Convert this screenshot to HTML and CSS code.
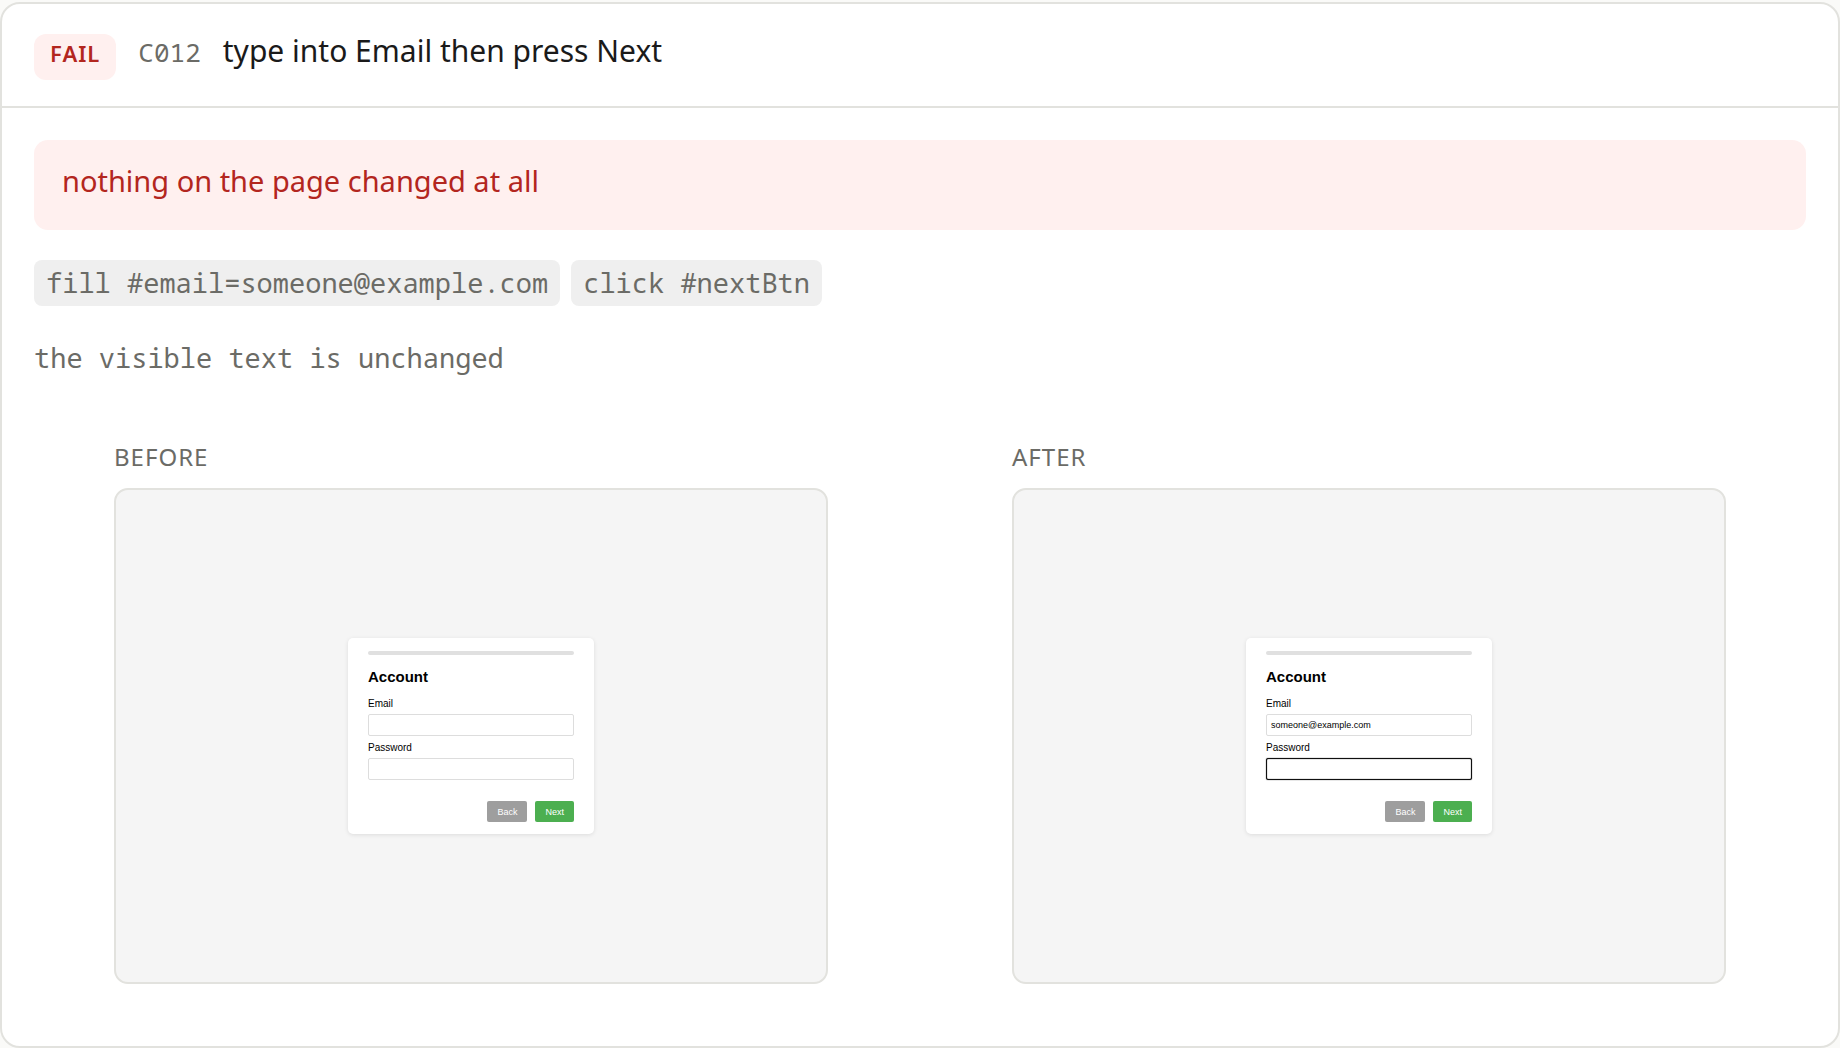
FILE: index.html
```html
<!DOCTYPE html>
<html lang="en">
<head>
    <meta charset="UTF-8">
    <meta name="viewport" content="width=device-width, initial-scale=1.0">
    <title>C012 - type into Email then press Next</title>
    <link rel="stylesheet" href="styles.css">
</head>
<body>
    <article class="case">
        <header class="case-head">
            <span class="badge">FAIL</span>
            <span class="case-id">C012</span>
            <h1 class="case-title">type into Email then press Next</h1>
        </header>

        <div class="case-body">
            <p class="reason">nothing on the page changed at all</p>
            <div class="steps">
                <code>fill #email=someone@example.com</code>
                <code>click #nextBtn</code>
            </div>
            <p class="note">the visible text is unchanged</p>

            <div class="shots">
                <figure>
                    <figcaption>Before</figcaption>
                    <div class="shot">
                        <form class="wizard">
                            <div class="progress"></div>
                            <h2>Account</h2>
                            <label for="email-before">Email</label>
                            <input type="email" id="email-before">
                            <label for="password-before">Password</label>
                            <input type="password" id="password-before">
                            <div class="actions">
                                <button type="button" class="back">Back</button>
                                <button type="button" class="next">Next</button>
                            </div>
                        </form>
                    </div>
                </figure>
                <figure>
                    <figcaption>After</figcaption>
                    <div class="shot">
                        <form class="wizard">
                            <div class="progress"></div>
                            <h2>Account</h2>
                            <label for="email-after">Email</label>
                            <input type="email" id="email-after" value="someone@example.com">
                            <label for="password-after">Password</label>
                            <input type="password" id="password-after" class="focused">
                            <div class="actions">
                                <button type="button" class="back">Back</button>
                                <button type="button" class="next">Next</button>
                            </div>
                        </form>
                    </div>
                </figure>
            </div>
        </div>
    </article>
</body>
</html>
```
FILE: styles.css
```css
* {
    box-sizing: border-box;
}
body {
    margin: 0;
    padding-top: 2px;
    background: #fafaf8;
    color: #1a1a1a;
    font-family: "Noto Sans", sans-serif;
    font-size: 29px;
    line-height: 45px;
}
.case {
    background: #fff;
    border: 2px solid #e2e2de;
    border-radius: 20px;
}
.case-head {
    display: flex;
    align-items: baseline;
    padding: 24px 32px 26px;
    border-bottom: 2px solid #e2e2de;
}
.badge {
    padding: 3px 16px 10px;
    border-radius: 12px;
    background: #fff0ef;
    color: #b3261e;
    font-size: 22px;
    font-weight: 600;
    line-height: 33px;
    letter-spacing: 1px;
}
.case-id {
    margin: 0 22px;
    color: #6b6b66;
    font-family: "Noto Sans Mono", "DejaVu Sans Mono", monospace;
    font-size: 26px;
}
.case-title {
    margin: 0;
    font-size: 30px;
    font-weight: 400;
}
.case-body {
    padding: 32px 32px 62px;
}
.reason {
    margin: 0 0 30px;
    padding: 18px 28px 27px;
    border-radius: 14px;
    background: #fff0ef;
    color: #b3261e;
}
.steps {
    display: flex;
    flex-wrap: wrap;
    gap: 11px;
}
.steps code {
    padding: 4px 12px 5px;
    border-radius: 8px;
    background: #efefef;
    color: #6b6b66;
    font-family: "Noto Sans Mono", "DejaVu Sans Mono", monospace;
    font-size: 27px;
    line-height: 37px;
}
.note {
    margin: 29px 0 0;
    color: #6b6b66;
    font-family: "Noto Sans Mono", "DejaVu Sans Mono", monospace;
    font-size: 27px;
}
.shots {
    display: grid;
    grid-template-columns: 1fr 1fr;
    gap: 24px;
    margin-top: 59px;
}
figure {
    margin: 0 80px;
}
figcaption {
    margin-bottom: 13px;
    color: #6b6b66;
    font-size: 24px;
    line-height: 36px;
    letter-spacing: 1px;
    text-transform: uppercase;
}
.shot {
    display: flex;
    align-items: center;
    justify-content: center;
    aspect-ratio: 714 / 496;
    border: 2px solid #e2e2de;
    border-radius: 14px;
    background: #f5f5f5;
}

/* the captured page, at thumbnail size */
.wizard {
    width: 246px;
    padding: 13px 20px 12px;
    border-radius: 5px;
    background: #fff;
    box-shadow: 0 1px 4px rgba(0, 0, 0, 0.1);
    color: #000;
    font-family: "Liberation Sans", Arial, sans-serif;
    font-size: 10px;
    line-height: 12px;
}
.progress {
    height: 4px;
    border-radius: 2px;
    background: #e0e0e0;
}
.wizard h2 {
    margin: 13px 0 12px;
    font-size: 15px;
    line-height: 18px;
}
.wizard label {
    display: block;
    margin-bottom: 4px;
}
.wizard input {
    display: block;
    width: 100%;
    height: 22px;
    margin: 0 0 6px;
    padding: 0 4px;
    border: 1px solid #ddd;
    border-radius: 2px;
    background: #fff;
    color: #000;
    font-family: inherit;
    font-size: 9px;
}
.wizard input.focused {
    border-color: #101010;
    box-shadow: 0 0 1px 0 #101010, inset 0 0 1px 0 #101010;
}
.actions {
    display: flex;
    justify-content: flex-end;
    gap: 8px;
    margin-top: 21px;
}
.wizard button {
    height: 21px;
    padding: 0 10px;
    border: none;
    border-radius: 2px;
    color: #fff;
    font-family: inherit;
    font-size: 9px;
}
.back {
    background: #9e9e9e;
}
.next {
    background: #4caf50;
}
```
